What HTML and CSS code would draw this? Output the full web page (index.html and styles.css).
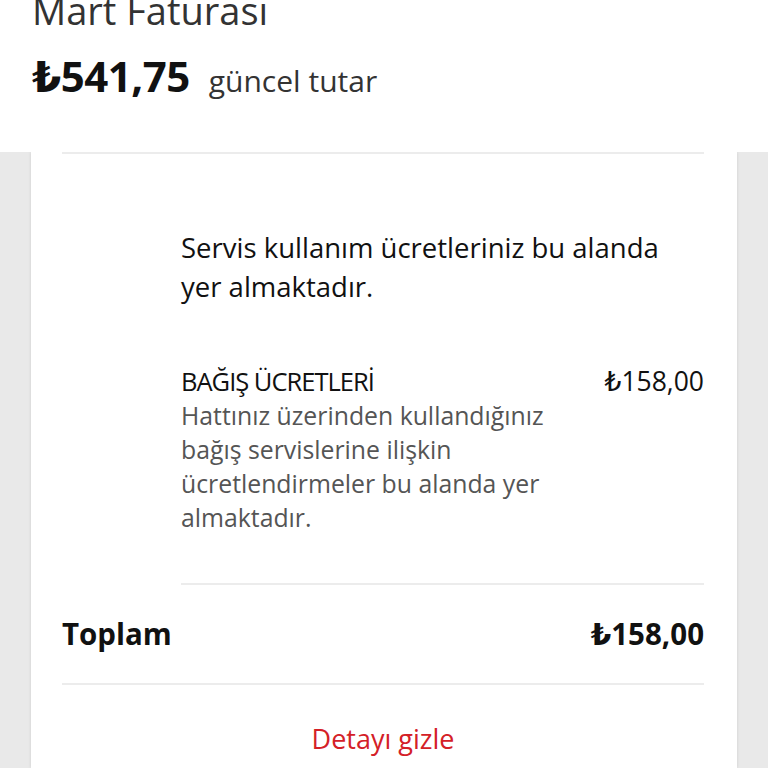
FILE: index.html
```html
<!DOCTYPE html>
<html lang="tr">
<head>
<meta charset="utf-8">
<link rel="stylesheet" href="styles.css">
</head>
<body>
<header class="header">
  <div class="title">Mart Faturası</div>
  <div class="amount-row">
    <span class="amount">₺541,75</span>
    <span class="amount-label">güncel tutar</span>
  </div>
</header>
<main class="main">
  <section class="card">
    <div class="card-inner">
      <p class="intro">Servis kullanım ücretleriniz bu alanda yer almaktadır.</p>
      <div class="item">
        <div class="item-text">
          <div class="item-title">BAĞIŞ ÜCRETLERİ</div>
          <div class="item-desc">Hattınız üzerinden kullandığınız bağış servislerine ilişkin ücretlendirmeler bu alanda yer almaktadır.</div>
        </div>
        <div class="item-price">₺158,00</div>
      </div>
      <div class="divider-short"></div>
      <div class="total">
        <span>Toplam</span>
        <span>₺158,00</span>
      </div>
      <div class="toggle">Detayı gizle</div>
    </div>
  </section>
</main>
</body>
</html>
```

FILE: styles.css
```css
* { box-sizing: border-box; }
html, body { margin: 0; padding: 0; }
body {
  font-family: "Open Sans", "DejaVu Sans", sans-serif;
  color: #111;
  background: #e9e9e9;
  width: 768px;
  height: 768px;
  overflow: hidden;
}
.header {
  height: 152px;
  background: #fff;
  padding-left: 32px;
  overflow: hidden;
  position: relative;
  z-index: 2;
}
.title {
  font-size: 38px;
  line-height: 38px;
  color: #333;
  margin-top: -9px;
}
.amount-row {
  display: flex;
  align-items: baseline;
  gap: 19px;
  margin-top: 18px;
}
.amount {
  font-size: 42px;
  font-weight: 700;
  color: #111;
  letter-spacing: -0.5px;
}
.amount-label {
  font-size: 30px;
  color: #333;
}
.main {
  padding: 0 31px;
}
.card {
  background: #fff;
  padding: 0 33px 0 31px;
  height: 616px;
  box-shadow: 0 0 3px rgba(0,0,0,0.12);
}
.card-inner {
  border-top: 2px solid #ececec;
  padding-top: 1px;
}
.intro {
  margin: 73px 0 0 119px;
  font-size: 27.5px;
  line-height: 39px;
  color: #111;
  max-width: 510px;
}
.item {
  display: flex;
  justify-content: space-between;
  align-items: flex-start;
  margin: 58px 0 0 119px;
}
.item-title {
  font-size: 25.5px;
  line-height: 34px;
  color: #111;
  letter-spacing: -1px;
}
.item-desc {
  font-size: 24.8px;
  line-height: 34px;
  color: #555;
  max-width: 400px;
}
.item-price {
  font-size: 26.5px;
  line-height: 34px;
  color: #111;
}
.divider-short {
  margin: 49px 0 0 119px;
  border-top: 2px solid #ececec;
}
.total {
  display: flex;
  justify-content: space-between;
  font-size: 29.5px;
  font-weight: 700;
  line-height: 32px;
  padding: 33px 0 33px;
  border-bottom: 2px solid #ececec;
}
.toggle {
  text-align: center;
  color: #d42027;
  font-size: 27px;
  line-height: 34px;
  margin-top: 37px;
}
```
